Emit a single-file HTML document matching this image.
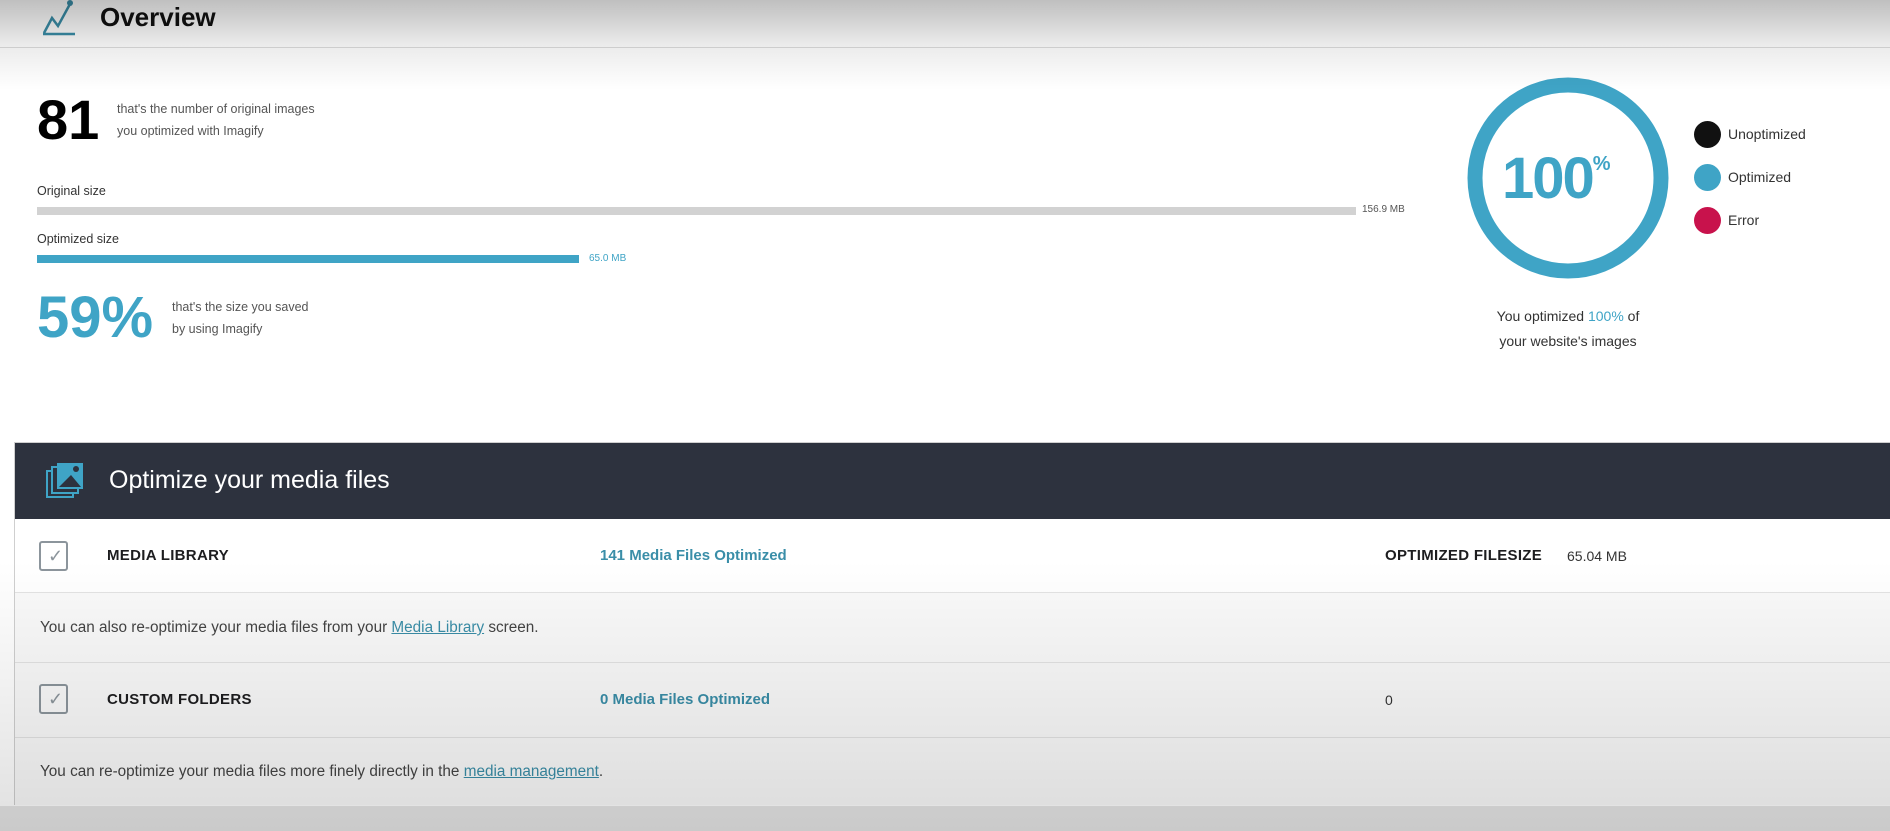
<!DOCTYPE html>
<html><head><meta charset="utf-8"><style>
*{margin:0;padding:0;box-sizing:border-box}
body{width:1890px;height:831px;overflow:hidden;background:#fff;font-family:"Liberation Sans",sans-serif;position:relative;color:#1d1d1f}
.a{position:absolute;white-space:nowrap}
.blue{color:#3fa4c6}
.small{font-size:12.5px;color:#555;line-height:22px}
.box{position:absolute;left:14px;top:442px;width:1900px;height:363px;border:1px solid #cfcfcf;background:#fff}
.hdr{position:absolute;left:0;top:0;right:0;height:76px;background:#2d323e}
.row{position:absolute;left:0;right:0;border-bottom:1px solid #e3e3e3}
.chk{position:absolute;left:24px;width:29px;height:30px;border:2px solid #8c959c;border-radius:3px}
.lbl{font-size:15px;font-weight:bold;letter-spacing:.3px;color:#1d1d1f}
.lnk{font-size:15px;font-weight:bold;color:#3a8ea8}
.note{font-size:15.3px;color:#444}
.note u{color:#3a8ea8}
.ov{position:absolute;left:0;top:0;width:1890px;height:831px;pointer-events:none;
background:linear-gradient(to bottom,rgba(0,0,0,.25) 0,rgba(0,0,0,.08) 45px,rgba(0,0,0,0) 90px),
linear-gradient(to bottom,rgba(0,0,0,0) 560px,rgba(0,0,0,.12) 831px)}
</style></head><body>
<svg class="a" style="left:40px;top:0" width="38" height="36" viewBox="0 0 38 36"><path d="M3 34 L35 34 M4 33 L12 18 L18 26 L30 4" fill="none" stroke="#3a8ea8" stroke-width="2.5"/><circle cx="30" cy="3" r="3" fill="#3a8ea8"/></svg>
<div class="a" style="left:100px;top:2px;font-size:26px;font-weight:bold;color:#111">Overview</div>
<div class="a" style="left:0;top:47px;width:1890px;height:1px;background:#ddd"></div>

<div class="a" style="left:37px;top:88px;font-size:56px;font-weight:bold;color:#000;line-height:64px">81</div>
<div class="a small" style="left:117px;top:98px">that's the number of original images<br>you optimized with Imagify</div>
<div class="a small" style="left:37px;top:180px;color:#333">Original size</div>
<div class="a" style="left:37px;top:207px;width:1319px;height:8px;background:#d2d2d2"></div>
<div class="a" style="left:1362px;top:204px;font-size:10px;color:#555">156.9 MB</div>
<div class="a small" style="left:37px;top:228px;color:#333">Optimized size</div>
<div class="a" style="left:37px;top:255px;width:542px;height:8px;background:#3fa4c6"></div>
<div class="a blue" style="left:589px;top:253px;font-size:10px">65.0 MB</div>
<div class="a blue" style="left:37px;top:286px;font-size:58px;font-weight:bold;line-height:64px">59%</div>
<div class="a small" style="left:172px;top:296px">that's the size you saved<br>by using Imagify</div>

<svg class="a" style="left:1464px;top:74px" width="208" height="208"><circle cx="104" cy="104" r="93" fill="none" stroke="#3fa4c6" stroke-width="15"/></svg>
<div class="a blue" style="left:1502px;top:132px;font-size:58px;font-weight:bold;line-height:64px;letter-spacing:-2px">100<sup style="font-size:20px;vertical-align:28px;letter-spacing:0">%</sup></div>
<div class="a" style="left:1468px;top:304px;width:200px;text-align:center;font-size:14px;line-height:25px;color:#333">You optimized <span class="blue">100%</span> of<br>your website's images</div>
<div class="a" style="left:1694px;top:121px;width:27px;height:27px;border-radius:50%;background:#111"></div>
<div class="a" style="left:1694px;top:164px;width:27px;height:27px;border-radius:50%;background:#3fa4c6"></div>
<div class="a" style="left:1694px;top:207px;width:27px;height:27px;border-radius:50%;background:#c8124c"></div>
<div class="a" style="left:1728px;top:126px;font-size:14px;color:#333">Unoptimized</div>
<div class="a" style="left:1728px;top:169px;font-size:14px;color:#333">Optimized</div>
<div class="a" style="left:1728px;top:212px;font-size:14px;color:#333">Error</div>

<div class="box">
 <div class="hdr">
  <svg class="a" style="left:30px;top:18px" width="42" height="40" viewBox="0 0 42 40"><rect x="2" y="10" width="26" height="26" fill="none" stroke="#3fa4c6" stroke-width="2"/><rect x="7" y="6" width="26" height="26" fill="#2d323e" stroke="#3fa4c6" stroke-width="2"/><rect x="12" y="2" width="26" height="26" fill="#3fa4c6"/><path d="M14 26 L26 14 L36 26 Z" fill="#2d323e"/><circle cx="31" cy="8" r="3" fill="#2d323e"/></svg>
  <div class="a" style="left:94px;top:23px;font-size:25px;color:#fff">Optimize your media files</div>
 </div>
 <div class="row" style="top:76px;height:74px">
  <div class="chk" style="top:22px"></div><div class="a" style="left:33px;top:27px;font-size:18px;color:#8c959c">✓</div>
  <div class="a lbl" style="left:92px;top:28px">MEDIA LIBRARY</div>
  <div class="a lnk" style="left:585px;top:28px">141 Media Files Optimized</div>
  <div class="a lbl" style="left:1370px;top:28px">OPTIMIZED FILESIZE</div>
  <div class="a" style="left:1552px;top:29px;font-size:14px;color:#333">65.04 MB</div>
 </div>
 <div class="row" style="top:150px;height:70px;background:#fafafa">
  <div class="a note" style="left:25px;top:26px">You can also re-optimize your media files from your <u>Media Library</u> screen.</div>
 </div>
 <div class="row" style="top:220px;height:75px;background:#fafafa">
  <div class="chk" style="top:21px"></div><div class="a" style="left:33px;top:26px;font-size:18px;color:#8c959c">✓</div>
  <div class="a lbl" style="left:92px;top:28px">CUSTOM FOLDERS</div>
  <div class="a lnk" style="left:585px;top:28px">0 Media Files Optimized</div>
  <div class="a" style="left:1370px;top:29px;font-size:14px;color:#333">0</div>
 </div>
 <div class="row" style="top:295px;height:67px;background:#fafafa;border-bottom:none">
  <div class="a note" style="left:25px;top:25px">You can re-optimize your media files more finely directly in the <u>media management</u>.</div>
 </div>
</div>
<div class="a" style="left:0;top:806px;width:1890px;height:25px;background:#e6e6e6"></div>
<div class="ov"></div>
</body></html>
